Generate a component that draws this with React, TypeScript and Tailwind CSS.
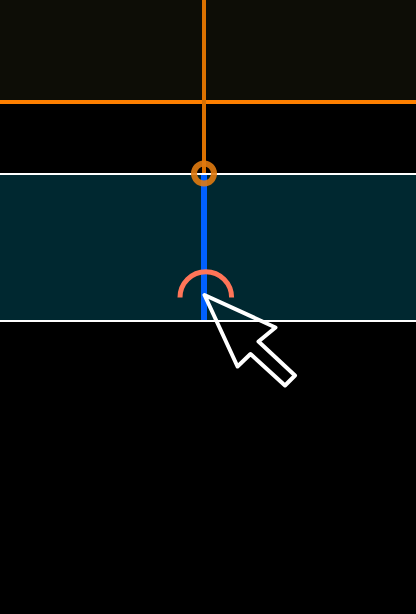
export default function App() {
  return (
    <div className="relative w-[416px] h-[614px] overflow-hidden bg-black flex flex-col">
      <div className="h-[100px] bg-[#0d0d06]" />
      <div className="h-[4px] bg-[#ff8000]" />
      <div className="h-[69px] bg-black" />
      <div className="h-[2px] bg-white" />
      <div className="h-[145px] bg-[#002830]" />
      <div className="h-[2px] bg-white" />
      <div className="flex-1 bg-black" />
      <svg className="absolute inset-0" width="416" height="614" viewBox="0 0 416 614" fill="none">
        <rect x="202" y="0" width="4" height="173" fill="#db7100" />
        <rect x="201" y="175" width="6" height="145" fill="#0060ff" />
        <circle cx="204" cy="173.5" r="10" stroke="#e07a10" strokeOpacity="0.9" strokeWidth="6" />
        <path d="M180 297.5 A25.8 25.8 0 0 1 231.6 297.5" stroke="#ff7558" strokeWidth="5" />
        <path
          d="M204.5 295 L275.5 327.5 L258.5 341.5 L295 375.5 L285 385.5 L250.5 354 L237.5 366.5 Z"
          stroke="#ffffff"
          strokeWidth="4"
          strokeLinejoin="round"
        />
      </svg>
    </div>
  );
}
